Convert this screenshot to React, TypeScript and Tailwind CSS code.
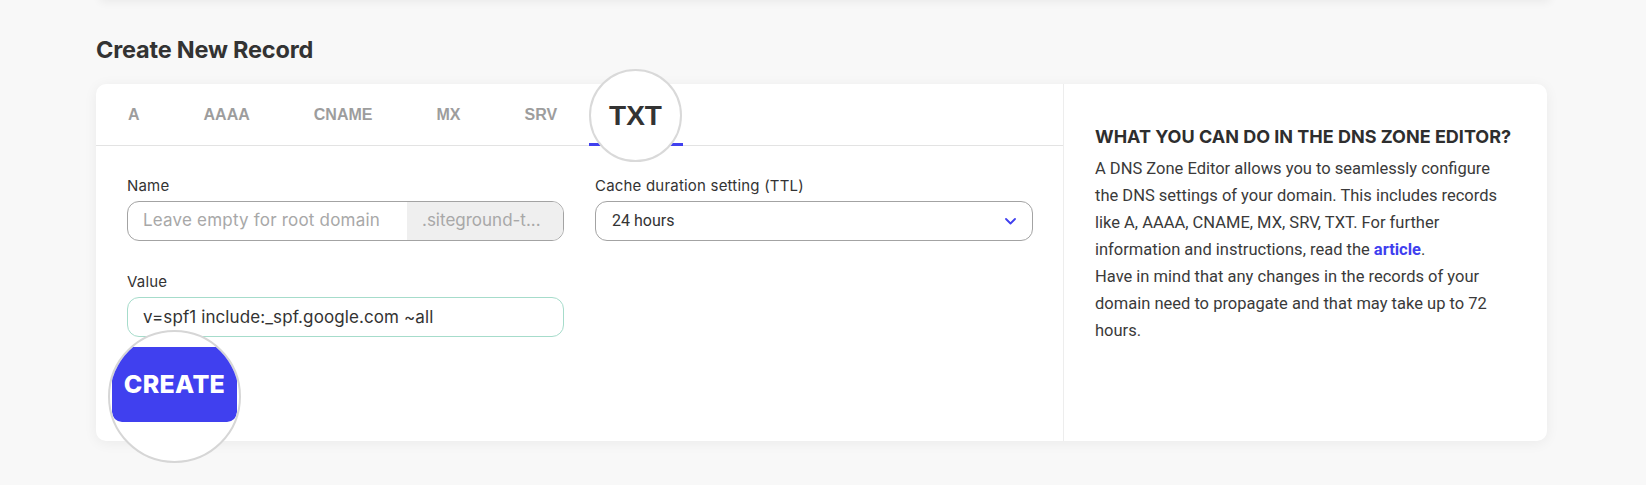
import React from "react";

const tabs = ["A", "AAAA", "CNAME", "MX", "SRV", "TXT"];

const poppins = "font-['Inter','Noto_Sans',sans-serif]";

export default function App() {
  const active = "TXT";

  return (
    <div className="w-[1646px] h-[485px] overflow-hidden bg-[#f8f8f8] text-[#333]">
      {/* bottom of the card above, only the shadow shows */}
      <div className="ml-[100px] mr-[96px] -mt-[20px] h-[20px] bg-[#f8f8f8] shadow-[0_2px_10px_rgba(0,0,0,0.06)]" />

      <div className="pl-[96px] pr-[99px]">
        <h2 className={`${poppins} mt-[36px] text-[23.5px] leading-[28px] font-bold tracking-[-0.2px] text-[#333]`}>
          Create New Record
        </h2>

        <div className="mt-[20px] flex h-[357px] rounded-[10px] bg-white shadow-[0_2px_14px_rgba(0,0,0,0.06)]">
          {/* left: form */}
          <div className="relative w-[967px]">
            <div className="flex h-[62px] border-b border-[#e3e3e3]">
              {tabs.map((t) => (
                <div
                  key={t}
                  className="relative flex items-center px-8 font-['Liberation_Sans',Arial,sans-serif] text-[16px] font-bold text-[#9d9d9d]"
                >
                  {/* the active label is shown enlarged in the magnifier */}
                  <span className={t === active ? "invisible" : ""}>{t}</span>
                  {t === active && (
                    <span className="absolute left-0 right-0 -bottom-px h-[3px] bg-[#4040ef]" />
                  )}
                </div>
              ))}
            </div>

            {/* magnifier over active tab */}
            <div className="absolute left-[493px] -top-[15px] flex h-[93px] w-[93px] items-center justify-center rounded-full border-2 border-[#d9d9d9] bg-white">
              <span className="font-['Liberation_Sans',Arial,sans-serif] text-[28px] font-bold text-[#333]">
                TXT
              </span>
            </div>

            <div className={`${poppins} grid grid-cols-[437px_438px] gap-x-[31px] gap-y-[31px] px-[31px] pt-[30px]`}>
              <div>
                <label className="block text-[15px] leading-[20px] tracking-[0.2px] text-[#333]">Name</label>
                <div className="mt-[5px] flex h-[40px] overflow-hidden rounded-[12px] border border-[#a3a3a3]">
                  <input
                    placeholder="Leave empty for root domain"
                    className="w-[279px] px-[15px] text-[17px] tracking-[0.2px] text-[#333] outline-none placeholder:text-[#a8a8a8]"
                  />
                  <div className="flex flex-1 items-center bg-[#efefef] pl-[15px] text-[17px] text-[#a8a8a8]">
                    .siteground-t...
                  </div>
                </div>
              </div>

              <div>
                <label className="block text-[15px] leading-[20px] tracking-[0.2px] text-[#333]">
                  Cache duration setting (TTL)
                </label>
                <div className="mt-[5px] flex h-[40px] items-center justify-between rounded-[12px] border border-[#a3a3a3] pl-[16px] pr-[16px]">
                  <span className="font-['Roboto',sans-serif] text-[16px] text-[#333]">24 hours</span>
                  <svg width="11" height="7" viewBox="0 0 11 7" fill="none">
                    <path d="M1 1l4.5 4.5L10 1" stroke="#4040ef" strokeWidth="1.8" strokeLinecap="round" strokeLinejoin="round" />
                  </svg>
                </div>
              </div>

              <div>
                <label className="block text-[15px] leading-[20px] tracking-[0.2px] text-[#333]">Value</label>
                <input
                  defaultValue="v=spf1 include:_spf.google.com ~all"
                  className="mt-[5px] block h-[40px] w-full rounded-[12px] border border-[#a6dccb] px-[15px] text-[17px] tracking-[0.1px] text-[#333] outline-none"
                />
              </div>
            </div>

            {/* magnifier over create button */}
            <div className="absolute left-[12px] top-[246px] h-[133px] w-[133px] overflow-hidden rounded-full border-2 border-[#d6d6d6] bg-white">
              <div
                className={`${poppins} mx-[2px] mt-[15px] flex h-[75px] items-center justify-center rounded-b-[10px] bg-[#4040ef] text-[25px] font-extrabold tracking-[0.3px] text-white`}
              >
                CREATE
              </div>
            </div>
          </div>

          {/* right: info */}
          <div className="flex-1 border-l border-[#ededed] pl-[31px] pt-[41px]">
            <h3 className={`${poppins} text-[18px] leading-[24px] font-bold text-[#2e2e2e]`}>
              WHAT YOU CAN DO IN THE DNS ZONE EDITOR?
            </h3>
            <p className="mt-[6px] whitespace-nowrap font-['Roboto',sans-serif] text-[16.5px] leading-[27px] text-[#3a3a3a]">
              A DNS Zone Editor allows you to seamlessly configure
              <br />
              the DNS settings of your domain. This includes records
              <br />
              like A, AAAA, CNAME, MX, SRV, TXT. For further
              <br />
              information and instructions, read the{" "}
              <a className="font-bold text-[#4040ef]">article</a>.
              <br />
              Have in mind that any changes in the records of your
              <br />
              domain need to propagate and that may take up to 72
              <br />
              hours.
            </p>
          </div>
        </div>
      </div>
    </div>
  );
}
